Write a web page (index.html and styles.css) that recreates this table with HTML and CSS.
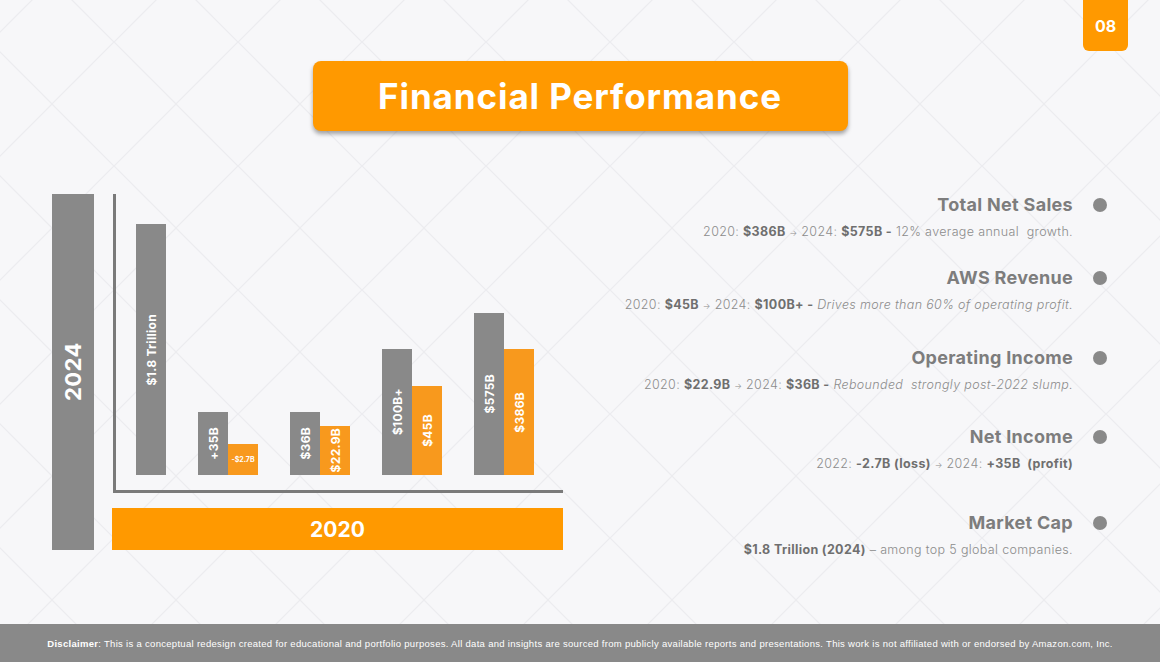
FILE: index.html
```html
<!DOCTYPE html>
<html lang="en">
<head>
<meta charset="utf-8">
<title>Financial Performance</title>
<link rel="stylesheet" href="styles.css">
</head>
<body>
<div class="slide">
  <svg class="bg" width="1160" height="662" aria-hidden="true">
    <defs>
      <pattern id="lat" width="124" height="124" patternUnits="userSpaceOnUse" x="-10" y="-20">
        <path d="M0 62 L62 0 L124 62 L62 124 Z" fill="none" stroke="#ececef" stroke-width="1.2"/>
      </pattern>
    </defs>
    <rect width="1160" height="662" fill="url(#lat)"/>
  </svg>

  <div class="badge">08</div>

  <header class="head">
    <h1 class="title">Financial Performance</h1>
  </header>

  <main class="main">
    <section class="chart">
      <div class="year-v"><span>2024</span></div>
      <div class="plot">
        <div class="group">
          <div class="bar gray" style="height:251px"><span class="vlab">$1.8 Trillion</span></div>
        </div>
        <div class="group">
          <div class="bar gray" style="height:63px"><span class="vlab">+35B</span></div>
          <div class="bar orange" style="height:31px"><span class="hlab">-$2.7B</span></div>
        </div>
        <div class="group">
          <div class="bar gray" style="height:63px"><span class="vlab">$36B</span></div>
          <div class="bar orange" style="height:49px"><span class="vlab">$22.9B</span></div>
        </div>
        <div class="group">
          <div class="bar gray" style="height:126px"><span class="vlab">$100B+</span></div>
          <div class="bar orange" style="height:89px"><span class="vlab">$45B</span></div>
        </div>
        <div class="group">
          <div class="bar gray" style="height:162px"><span class="vlab">$575B</span></div>
          <div class="bar orange" style="height:126px"><span class="vlab">$386B</span></div>
        </div>
      </div>
      <div class="year-h">2020</div>
    </section>

    <section class="metrics">
      <div class="metric">
        <div class="m-head"><h2>Total Net Sales</h2><span class="dot"></span></div>
        <p class="m-sub">2020: <b>$386B</b> <span class="arr">→</span> 2024: <b>$575B -</b> 12% average annual&nbsp; growth.</p>
      </div>
      <div class="metric">
        <div class="m-head"><h2>AWS Revenue</h2><span class="dot"></span></div>
        <p class="m-sub">2020: <b>$45B</b> <span class="arr">→</span> 2024: <b>$100B+ -</b> <i>Drives more than 60% of operating profit.</i></p>
      </div>
      <div class="metric">
        <div class="m-head"><h2>Operating Income</h2><span class="dot"></span></div>
        <p class="m-sub">2020: <b>$22.9B</b> <span class="arr">→</span> 2024: <b>$36B -</b> <i>Rebounded&nbsp; strongly post-2022 slump.</i></p>
      </div>
      <div class="metric">
        <div class="m-head"><h2>Net Income</h2><span class="dot"></span></div>
        <p class="m-sub">2022: <b>-2.7B (loss)</b> <span class="arr">→</span> 2024: <b>+35B&nbsp; (profit)</b></p>
      </div>
      <div class="metric">
        <div class="m-head"><h2>Market Cap</h2><span class="dot"></span></div>
        <p class="m-sub"><b>$1.8 Trillion (2024)</b> – among top 5 global companies.</p>
      </div>
    </section>
  </main>

  <footer class="foot">
    <p><b>Disclaimer</b>: This is a conceptual redesign created for educational and portfolio purposes. All data and insights are sourced from publicly available reports and presentations. This work is not affiliated with or endorsed by Amazon.com, Inc.</p>
  </footer>
</div>
</body>
</html>
```

FILE: styles.css
```css
* { box-sizing: border-box; }
html, body { margin: 0; padding: 0; }
body {
  width: 1160px;
  height: 662px;
  overflow: hidden;
  background: #f7f7f9;
  font-family: Inter, "Open Sans", sans-serif;
}
.slide {
  position: relative;
  width: 1160px;
  height: 662px;
  display: flex;
  flex-direction: column;
}
.bg {
  position: absolute;
  left: 0;
  top: 0;
  z-index: 0;
}
.badge {
  position: absolute;
  top: 0;
  right: 32px;
  width: 45px;
  height: 51px;
  background: #ff9900;
  border-radius: 0 0 6px 6px;
  color: #fff;
  font-weight: 700;
  font-size: 16px;
  display: flex;
  align-items: center;
  justify-content: center;
  z-index: 2;
}
.head {
  position: relative;
  z-index: 1;
  display: flex;
  justify-content: center;
  padding-top: 61px;
}
.title {
  margin: 0;
  width: 535px;
  height: 70px;
  background: #ff9900;
  border-radius: 8px;
  box-shadow: 0 3px 4px rgba(0,0,0,0.35);
  color: #fff;
  font-size: 35px;
  font-weight: 700;
  letter-spacing: 0.9px;
  display: flex;
  align-items: center;
  justify-content: center;
}
.main {
  position: relative;
  z-index: 1;
  display: flex;
  justify-content: space-between;
  padding: 63px 53px 0 52px;
  flex: 1;
}
/* chart */
.chart {
  display: grid;
  grid-template-columns: 42px 451px;
  grid-template-rows: 299px 42px;
  column-gap: 18px;
  row-gap: 15px;
}
.year-v {
  grid-row: 1 / 3;
  background: #898989;
  display: flex;
  align-items: center;
  justify-content: center;
}
.year-v span {
  writing-mode: vertical-rl;
  transform: rotate(180deg);
  color: #fff;
  font-weight: 700;
  font-size: 22px;
  letter-spacing: 0.5px;
}
.plot {
  border-left: 3px solid #7a7a7a;
  border-bottom: 3px solid #7a7a7a;
  display: flex;
  align-items: flex-end;
  gap: 32px;
  padding: 0 0 15px 20px;
  margin-left: 1px;
}
.group {
  display: flex;
  align-items: flex-end;
}
.bar {
  width: 30px;
  display: flex;
  align-items: center;
  justify-content: center;
}
.gray { background: #898989; }
.orange { background: #f8991d; }
.vlab {
  writing-mode: vertical-rl;
  transform: rotate(180deg);
  color: #fff;
  font-weight: 700;
  font-size: 12px;
  white-space: nowrap;
  letter-spacing: 0.3px;
}
.hlab {
  color: #fff;
  font-weight: 700;
  font-size: 7px;
  white-space: nowrap;
}
.year-h {
  grid-column: 2;
  background: #ff9900;
  color: #fff;
  font-weight: 700;
  font-size: 21px;
  display: flex;
  align-items: center;
  justify-content: center;
}
/* metrics */
.metrics {
  display: flex;
  flex-direction: column;
  align-items: flex-end;
}
.metric { text-align: right; }
.metric:nth-child(2) { margin-top: 25px; }
.metric:nth-child(3) { margin-top: 32px; }
.metric:nth-child(4) { margin-top: 31px; }
.metric:nth-child(5) { margin-top: 38px; }
.m-head {
  display: flex;
  justify-content: flex-end;
  align-items: center;
  gap: 20px;
  height: 22px;
}
.m-head h2 {
  margin: 0;
  font-size: 18px;
  font-weight: 700;
  color: #7d7d7d;
  line-height: 22px;
  letter-spacing: 0.3px;
}
.dot {
  width: 14px;
  height: 14px;
  border-radius: 50%;
  background: #898989;
}
.m-sub {
  margin: 7px 34px 0 0;
  font-size: 12.5px;
  line-height: 18px;
  color: #8c8c8c;
  font-weight: 300;
  letter-spacing: 0.35px;
  white-space: nowrap;
}
.m-sub b { color: #6f6f6f; font-weight: 700; }
.m-sub i { font-style: italic; }
.arr { font-size: 8px; }
.foot {
  position: relative;
  z-index: 1;
  height: 38px;
  background: #898989;
  display: flex;
  align-items: center;
  justify-content: center;
}
.foot p {
  margin: 0;
  color: #fff;
  font-family: "Liberation Sans", Arial, sans-serif;
  font-size: 9.5px;
  letter-spacing: 0.3px;
  white-space: nowrap;
}
```
